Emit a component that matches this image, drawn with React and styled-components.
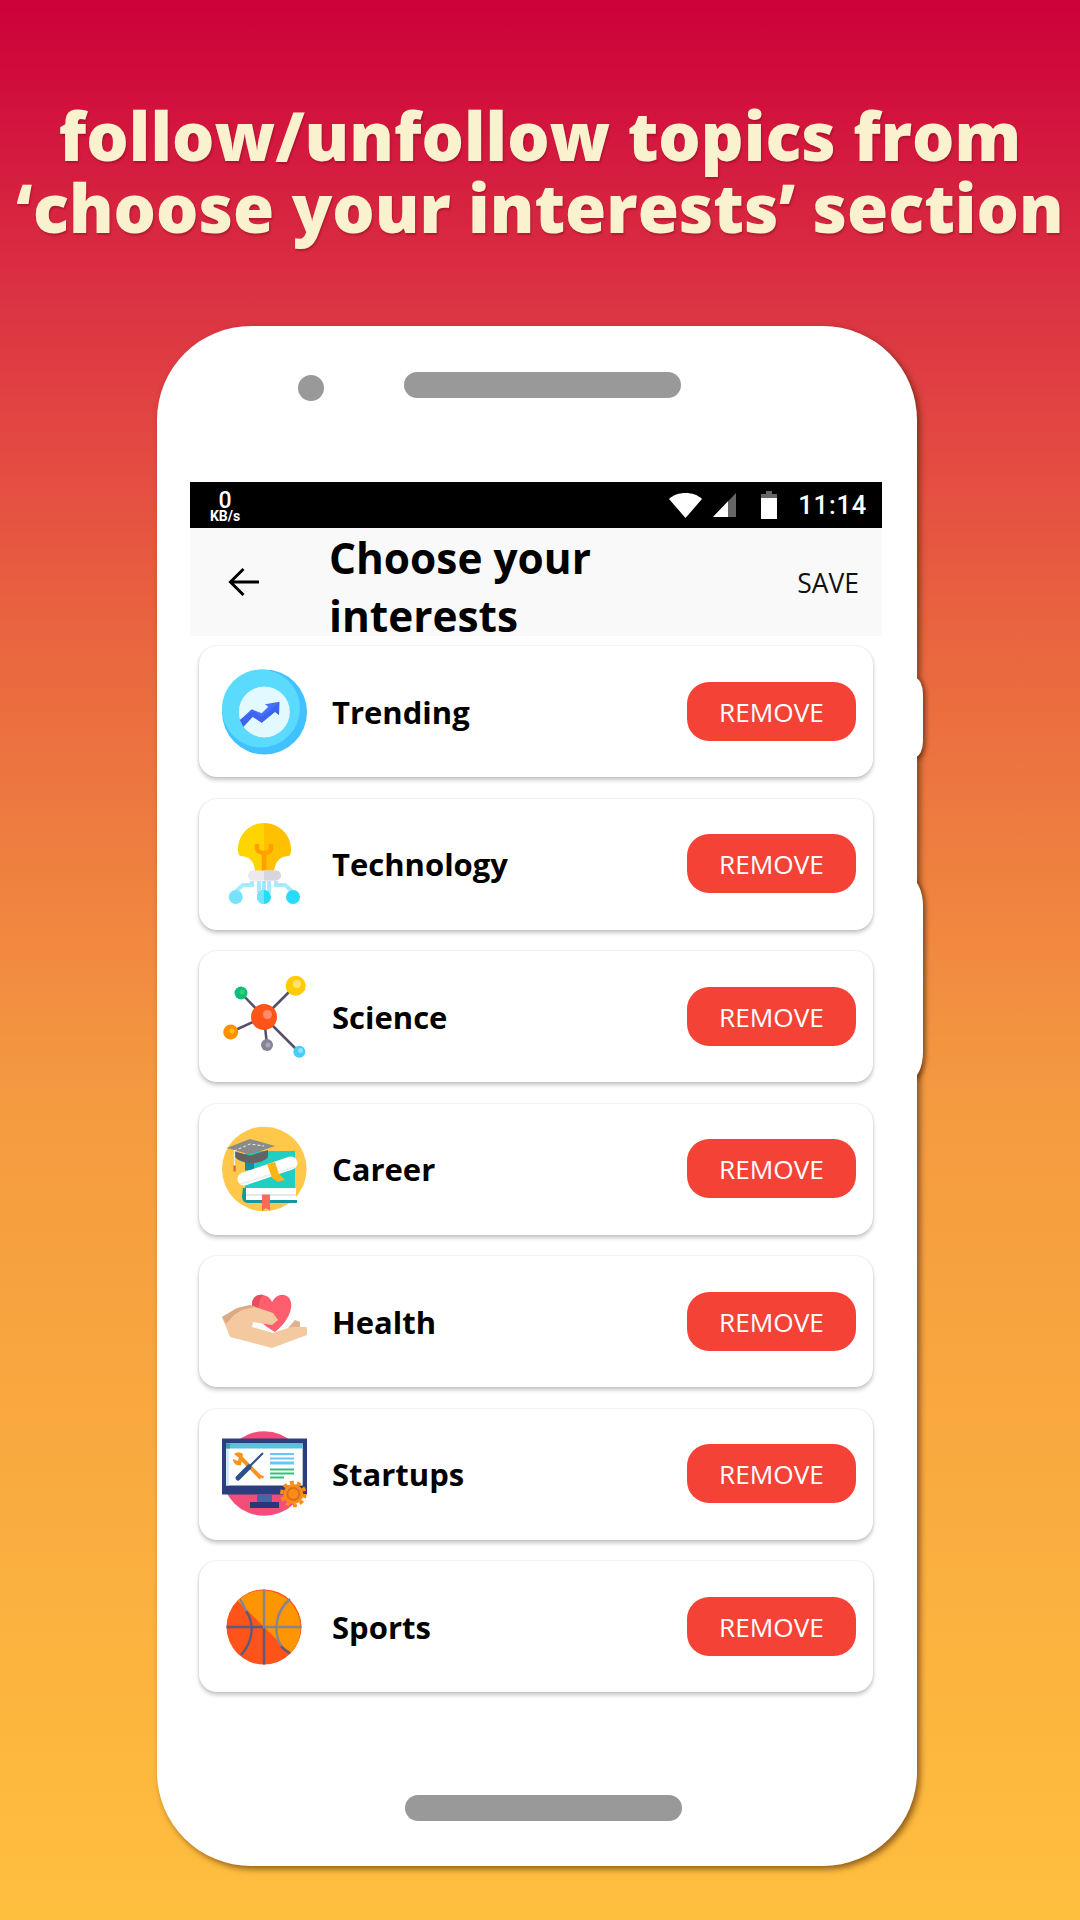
import React from 'react';
import styled, { createGlobalStyle } from 'styled-components';

const Global = createGlobalStyle`
  html, body { margin: 0; padding: 0; }
  body { width: 1080px; height: 1920px; overflow: hidden; font-family: "Open Sans", sans-serif; }
`;

const Page = styled.div`
  width: 1080px; height: 1920px; box-sizing: border-box; overflow: hidden;
  display: flex; flex-direction: column; align-items: center;
  background: linear-gradient(180deg, #cc003a 0%, #dc3443 16%, #e54f41 25.5%, #e9653f 33%, #f49a40 57%, #ffbf3e 100%);
`;
const Headline = styled.h1`
  margin: 100px 0 0; width: 1080px; height: 226px; flex: none;
  font: 800 66.7px/71.5px "Open Sans", sans-serif; text-align: center; white-space: nowrap;
  color: #faf2cf; text-shadow: 1px 2px 2px rgba(90, 10, 20, .35);
`;
const Phone = styled.div`
  position: relative; flex: none; box-sizing: border-box;
  width: 760px; height: 1540px; padding: 156px 35px 0 33px; margin-right: 6px;
  background: #fff; border-radius: 94px;
  box-shadow: 3px 3px 6px rgba(70, 30, 0, .6);
  display: flex; flex-direction: column;
`;
const SideKey = styled.div`
  position: absolute; left: 752px; width: 14px; top: ${p => p.$top}px; height: ${p => p.$h}px;
  background: #fff; border-radius: 0 ${p => p.$r}px ${p => p.$r}px 0 / 0 ${p => p.$r * 2}px ${p => p.$r * 2}px 0;
  box-shadow: 3px 2px 4px rgba(70, 30, 0, .5);
  clip-path: inset(-8px -12px -8px 8px);
`;
const Camera = styled.div`
  position: absolute; left: 141px; top: 49px; width: 26px; height: 26px; border-radius: 50%; background: #999;
`;
const Speaker = styled.div`
  position: absolute; left: ${p => p.$left}px; top: ${p => p.$top}px; width: 277px; height: 26px; border-radius: 13px; background: #999;
`;
const StatusBar = styled.div`
  height: 46px; background: #000; color: #fff; flex: none;
  display: flex; align-items: center; font-family: Roboto, sans-serif;
`;
const Speed = styled.div`
  width: 40px; margin-left: 15px; text-align: center; display: flex; flex-direction: column;
`;
const SpeedValue = styled.span`
  font-size: 23px; line-height: 19px; margin-top: 3px; font-weight: 500;
`;
const SpeedUnit = styled.span`
  font-size: 14px; line-height: 13px; font-weight: 700;
`;
const StatusIcons = styled.div`
  margin-left: auto; display: flex; align-items: center; padding-right: 15px;
`;
const StatusGlyph = styled.svg`
  display: block; flex: none; margin-left: ${p => p.$ml}px;
`;
const Clock = styled.span`
  font: 500 25.5px/46px Roboto, sans-serif; letter-spacing: .8px; margin-left: 21px;
`;
const AppBar = styled.div`
  height: 108px; background: #f9f9f9; display: flex; flex: none; overflow: hidden; position: relative;
`;
const BackBtn = styled.div`
  width: 139px; flex: none; display: flex; padding: 39px 0 0 38px; box-sizing: border-box;
`;
const AppTitle = styled.div`
  width: 290px; height: 108px; font: 700 42.4px/57.5px "Open Sans", sans-serif; color: #000; padding-top: 1px;
`;
const Save = styled.div`
  margin-left: auto; margin-right: 23px; font: 400 26.5px/110px "Open Sans", sans-serif; color: #111;
`;
const Cards = styled.div`
  display: flex; flex-direction: column; gap: 21.5px; padding: 10px 9px 0 9px;
`;
const Card = styled.div`
  height: 131px; flex: none; box-sizing: border-box; background: #fff; border-radius: 18px;
  display: flex; align-items: center; padding: 0 17px 0 23px;
  box-shadow: 0 3px 4px rgba(0,0,0,.22), 0 0 2px rgba(0,0,0,.14);
`;
const IconBox = styled.div`
  width: 86px; height: 86px; flex: none; display: flex;
  svg { display: block; }
`;
const Label = styled.div`
  margin-left: 24px; font: 700 31px/40px "Open Sans", sans-serif; color: #000;
`;
const Remove = styled.div`
  margin-left: auto; margin-bottom: 1px; width: 169px; height: 59px; box-sizing: border-box; padding-top: 2px;
  background: #f44336; border-radius: 22px; color: #fff;
  display: flex; align-items: center; justify-content: center; font: 400 26.2px/57px "Open Sans", sans-serif;
`;

const Trend = () => (
  <svg width="86" height="86" viewBox="0 0 86 86">
    <circle cx="42.5" cy="43" r="42.5" fill="#41c1ff" />
    <circle cx="39" cy="39.500" r="39" fill="#5adafc" />
    <circle cx="42.300" cy="43" r="25.500" fill="#e2f9ff" />
    <path d="M18 51L29.700 40.300 39.700 44.300 46.300 37.700 43 35.300 57.300 32.700 57 46 53 42.700 39.700 53.700 30.700 47.700 21.300 57.700z" fill="#4670fb" />
    <path d="M18 51L21.300 57.700 30.700 47.700 39.700 53.700 53 42.700 57 46 57.300 32.700 53 37 39.700 48 30.700 42z" fill="#3e63ee" />
  </svg>
);
const Bulb = () => (
  <svg width="86" height="86" viewBox="0 0 86 86">
    <path d="M42 2C27 2 16 14 16 28c0 5 1 7 3 7 9 1 13 5 14 15h9z" fill="#ffd500" />
    <path d="M42 2C57 2 69 14 69 28c0 5-1 7-3 7-9 1-12 5-14 15H42z" fill="#ffc000" />
    <path d="M42 50V32M35 23v5c0 3 7 4 7 4s7-1 7-4v-5" fill="none" stroke="#ff9f00" strokeWidth="4.500" />
    <rect x="26" y="49.500" width="33" height="10" rx="5" fill="#eaeaee" />
    <path d="M42 49.500h12a5 5 0 0 1 0 10H42z" fill="#d6d6dc" />
    <path d="M30 60v4H21l-7 6M37 60v12M47 60v12M54 60v4h9l7 6" fill="none" stroke="#a8eafb" strokeWidth="4" />
    <path d="M40 60h4v12h-4z" fill="#9be7fb" />
    <circle cx="13.700" cy="76" r="7" fill="#76e2fb" />
    <circle cx="42" cy="76" r="7" fill="#27dcfb" />
    <path d="M42 69a7 7 0 0 0 0 14z" fill="#76e2fb" />
    <circle cx="71" cy="76" r="7" fill="#27dcfb" />
  </svg>
);
const Atom = () => (
  <svg width="86" height="86" viewBox="0 0 86 86">
    <g stroke="#55506a" strokeWidth="2.500">
      <path d="M19 19l23 24M73 12L42 43M9 58l33-15M42 43l3 28M42 43l35 35" />
    </g>
    <circle cx="19" cy="19" r="6.500" fill="#0bbf7a" /><circle cx="20" cy="18" r="2.500" fill="#35d06a" />
    <circle cx="73.700" cy="11.700" r="10" fill="#ffcb05" /><circle cx="75" cy="10" r="4" fill="#ffe170" />
    <circle cx="8.700" cy="58" r="7.500" fill="#ff9000" /><circle cx="10" cy="57" r="2.500" fill="#ffc400" />
    <circle cx="42" cy="43" r="13" fill="#ff5417" /><circle cx="45.500" cy="40.500" r="4.500" fill="#ff8c6c" />
    <circle cx="45" cy="71" r="6" fill="#868596" /><circle cx="46" cy="71" r="2.500" fill="#a9a8b4" />
    <circle cx="77.300" cy="77.700" r="6" fill="#46cdfb" /><circle cx="78.500" cy="76.500" r="2.500" fill="#8ee4fc" />
  </svg>
);
const Career = () => (
  <svg width="86" height="86" viewBox="0 0 86 86">
    <circle cx="42.300" cy="43" r="42.300" fill="#ffc84a" />
    <rect x="23" y="25" width="50" height="37" fill="#20cfc1" />
    <rect x="23" y="32" width="9" height="12" fill="#138fa4" />
    <path d="M21 62h4v12h50v3H26c-4 0-6-3-6-7z" fill="#15979f" />
    <rect x="24" y="62" width="50" height="12" fill="#fff" />
    <rect x="24" y="68" width="50" height="2" fill="#e3eaec" />
    <path d="M40 68.500h8V85l-4-3-4 3z" fill="#fb6a5f" />
    <path d="M22 53L69 37" stroke="#fff" strokeWidth="13" strokeLinecap="round" />
    <path d="M18 58l54-17" stroke="#e8eef0" strokeWidth="1.500" />
    <path d="M45 38l8-2 4 12 6 6-7 2-6-4z" fill="#fdb515" />
    <path d="M4.700 22L28 13l25 7-25 8.500z" fill="#8b8b8b" />
    <path d="M13 25.500l15 4 18-5.500v7c-6 8-26 8-33 0z" fill="#636363" />
    <path d="M12 25l16-7 14 2" fill="none" stroke="#eee" strokeWidth="1" strokeDasharray="3 2" />
    <path d="M12.500 24v16" stroke="#eee" strokeWidth="1.200" />
    <rect x="11.500" y="39.500" width="2.200" height="6" fill="#ef5b4d" />
  </svg>
);
const Health = () => (
  <svg width="86" height="86" viewBox="0 0 86 86">
    <path d="M30 25C30 18 36 15 41 16C46 17 49 20 50 23C53 18 57 15 62 16C68 17 70 23 69 29C67 40 60 47 53 53C45 49 30 38 30 25z" fill="#fe5e6e" />
    <path d="M30 25C30 18 36 15 41 16C37 20 36 27 37 34C33 31 30 28 30 25z" fill="#e84c5e" />
    <path d="M0 38L14.700 29.300 28 26 51 34 56 41 50 46 31 43 30 48 51 54 66 49 78 48 85 48 85 56 50 69 8 58z" fill="#f5c9a0" />
    <path d="M0 38L14.700 29.300 28 26 33 28 20 31 12 36 4 45z" fill="#dcaa85" />
    <path d="M66 49L73 41 78 43 78 48z" fill="#e3b08f" />
  </svg>
);
const Startup = () => (
  <svg width="86" height="86" viewBox="0 0 86 86">
    <circle cx="42.300" cy="42.500" r="42.300" fill="#f44d7c" />
    <rect x="0" y="7.500" width="85" height="56" fill="#2c3e7e" />
    <rect x="4" y="12.500" width="76.700" height="42" fill="#fff" />
    <rect x="4" y="17.500" width="3" height="37" fill="#cfeaf8" />
    <rect x="4" y="12.500" width="76.700" height="5" fill="#5cc0dc" />
    <rect x="4" y="12.500" width="4" height="5" fill="#3aa29e" />
    <rect x="35" y="63.500" width="15" height="8" fill="#4565a5" />
    <rect x="28" y="71" width="29" height="6" fill="#27377a" />
    <g fill="#6cc5f5"><rect x="48" y="22" width="24" height="2" /><rect x="48" y="26.500" width="24" height="2" /><rect x="48" y="30.500" width="24" height="3" /></g>
    <g fill="#34c078"><rect x="48" y="37.500" width="24" height="2" /><rect x="48" y="41.500" width="24" height="2" /><rect x="48" y="45.500" width="14" height="2" /></g>
    <path d="M18 26L39 47" stroke="#f7941d" strokeWidth="4" />
    <path d="M21 23a7 7 0 0 0-9 0l5 4-1 3-5-2a6 6 0 0 0 8 6z" fill="#f7941d" />
    <path d="M41 48l-4-4 5 1z" fill="#f7941d" />
    <path d="M41 22L26 37" stroke="#2e4f8c" strokeWidth="2" />
    <path d="M27 36L16 47" stroke="#2e4f8c" strokeWidth="5" strokeLinecap="round" />
    <circle cx="71.300" cy="63" r="10" fill="#fb8c17" />
    <circle cx="71.300" cy="63" r="11.500" fill="none" stroke="#fb8c17" strokeWidth="3.500" strokeDasharray="4 3.200" />
    <circle cx="71.300" cy="63" r="6" fill="none" stroke="#d9701a" strokeWidth="2" />
  </svg>
);
const Ball = () => (
  <svg width="86" height="86" viewBox="0 0 86 86">
    <circle cx="42" cy="43" r="37.500" fill="#ff5419" />
    <path d="M15.500 16.500A37.500 37.500 0 0 1 68.500 69.500z" fill="#ff9500" />
    <g fill="none" stroke="#5b5b7e" strokeWidth="2.400">
      <path d="M42 43v37.500M4.500 43H42M24 27C33 40 31 58 19 71M59 62c2 3 5 5 9 7" />
    </g>
    <g fill="none" stroke="#85858f" strokeWidth="2.400">
      <path d="M42 5.500V43H79.500M68 15C53 28 51 48 59 62M18 15c2 3 4 7 6 12" />
    </g>
  </svg>
);

const rows = [
  ['Trending', Trend], ['Technology', Bulb], ['Science', Atom], ['Career', Career],
  ['Health', Health], ['Startups', Startup], ['Sports', Ball],
];

export default function App() {
  return (
    <Page>
      <Global />
      <Headline>follow/unfollow topics from<br />‘choose your interests’ section</Headline>
      <Phone>
        <SideKey $top={352} $h={79} $r={8} />
        <SideKey $top={552} $h={202} $r={14} />
        <Camera />
        <Speaker $left={247} $top={46} />
        <Speaker $left={248} $top={1469} />
        <StatusBar>
          <Speed><SpeedValue>0</SpeedValue><SpeedUnit>KB/s</SpeedUnit></Speed>
          <StatusIcons>
            <StatusGlyph $ml={0} width="33" height="25" viewBox="0 0 33 25"><path d="M0 6C4 2 10 0 16.500 0S29 2 33 6L16.500 25z" fill="#fff" /></StatusGlyph>
            <StatusGlyph $ml={11} width="23" height="24" viewBox="0 0 23 24"><path d="M0 24L23 0v24z" fill="#666" /><path d="M0 24L15 8.300V24z" fill="#fff" /></StatusGlyph>
            <StatusGlyph $ml={25} width="16" height="28" viewBox="0 0 16 28"><rect x="5" y="0" width="6" height="3" fill="#666" /><rect x="0" y="3" width="16" height="4" fill="#666" /><rect x="0" y="7" width="16" height="21" fill="#fff" /></StatusGlyph>
            <Clock>11:14</Clock>
          </StatusIcons>
        </StatusBar>
        <AppBar>
          <BackBtn>
            <svg width="31" height="31" viewBox="0 0 32 32" fill="none" stroke="#000" strokeWidth="3"><path d="M32 15.500H3M16 2L2.500 15.500 16 29" /></svg>
          </BackBtn>
          <AppTitle>Choose your interests</AppTitle>
          <Save>SAVE</Save>
        </AppBar>
        <Cards>
          {rows.map(([name, Icon]) => (
            <Card key={name}>
              <IconBox><Icon /></IconBox>
              <Label>{name}</Label>
              <Remove>REMOVE</Remove>
            </Card>
          ))}
        </Cards>
      </Phone>
    </Page>
  );
}
